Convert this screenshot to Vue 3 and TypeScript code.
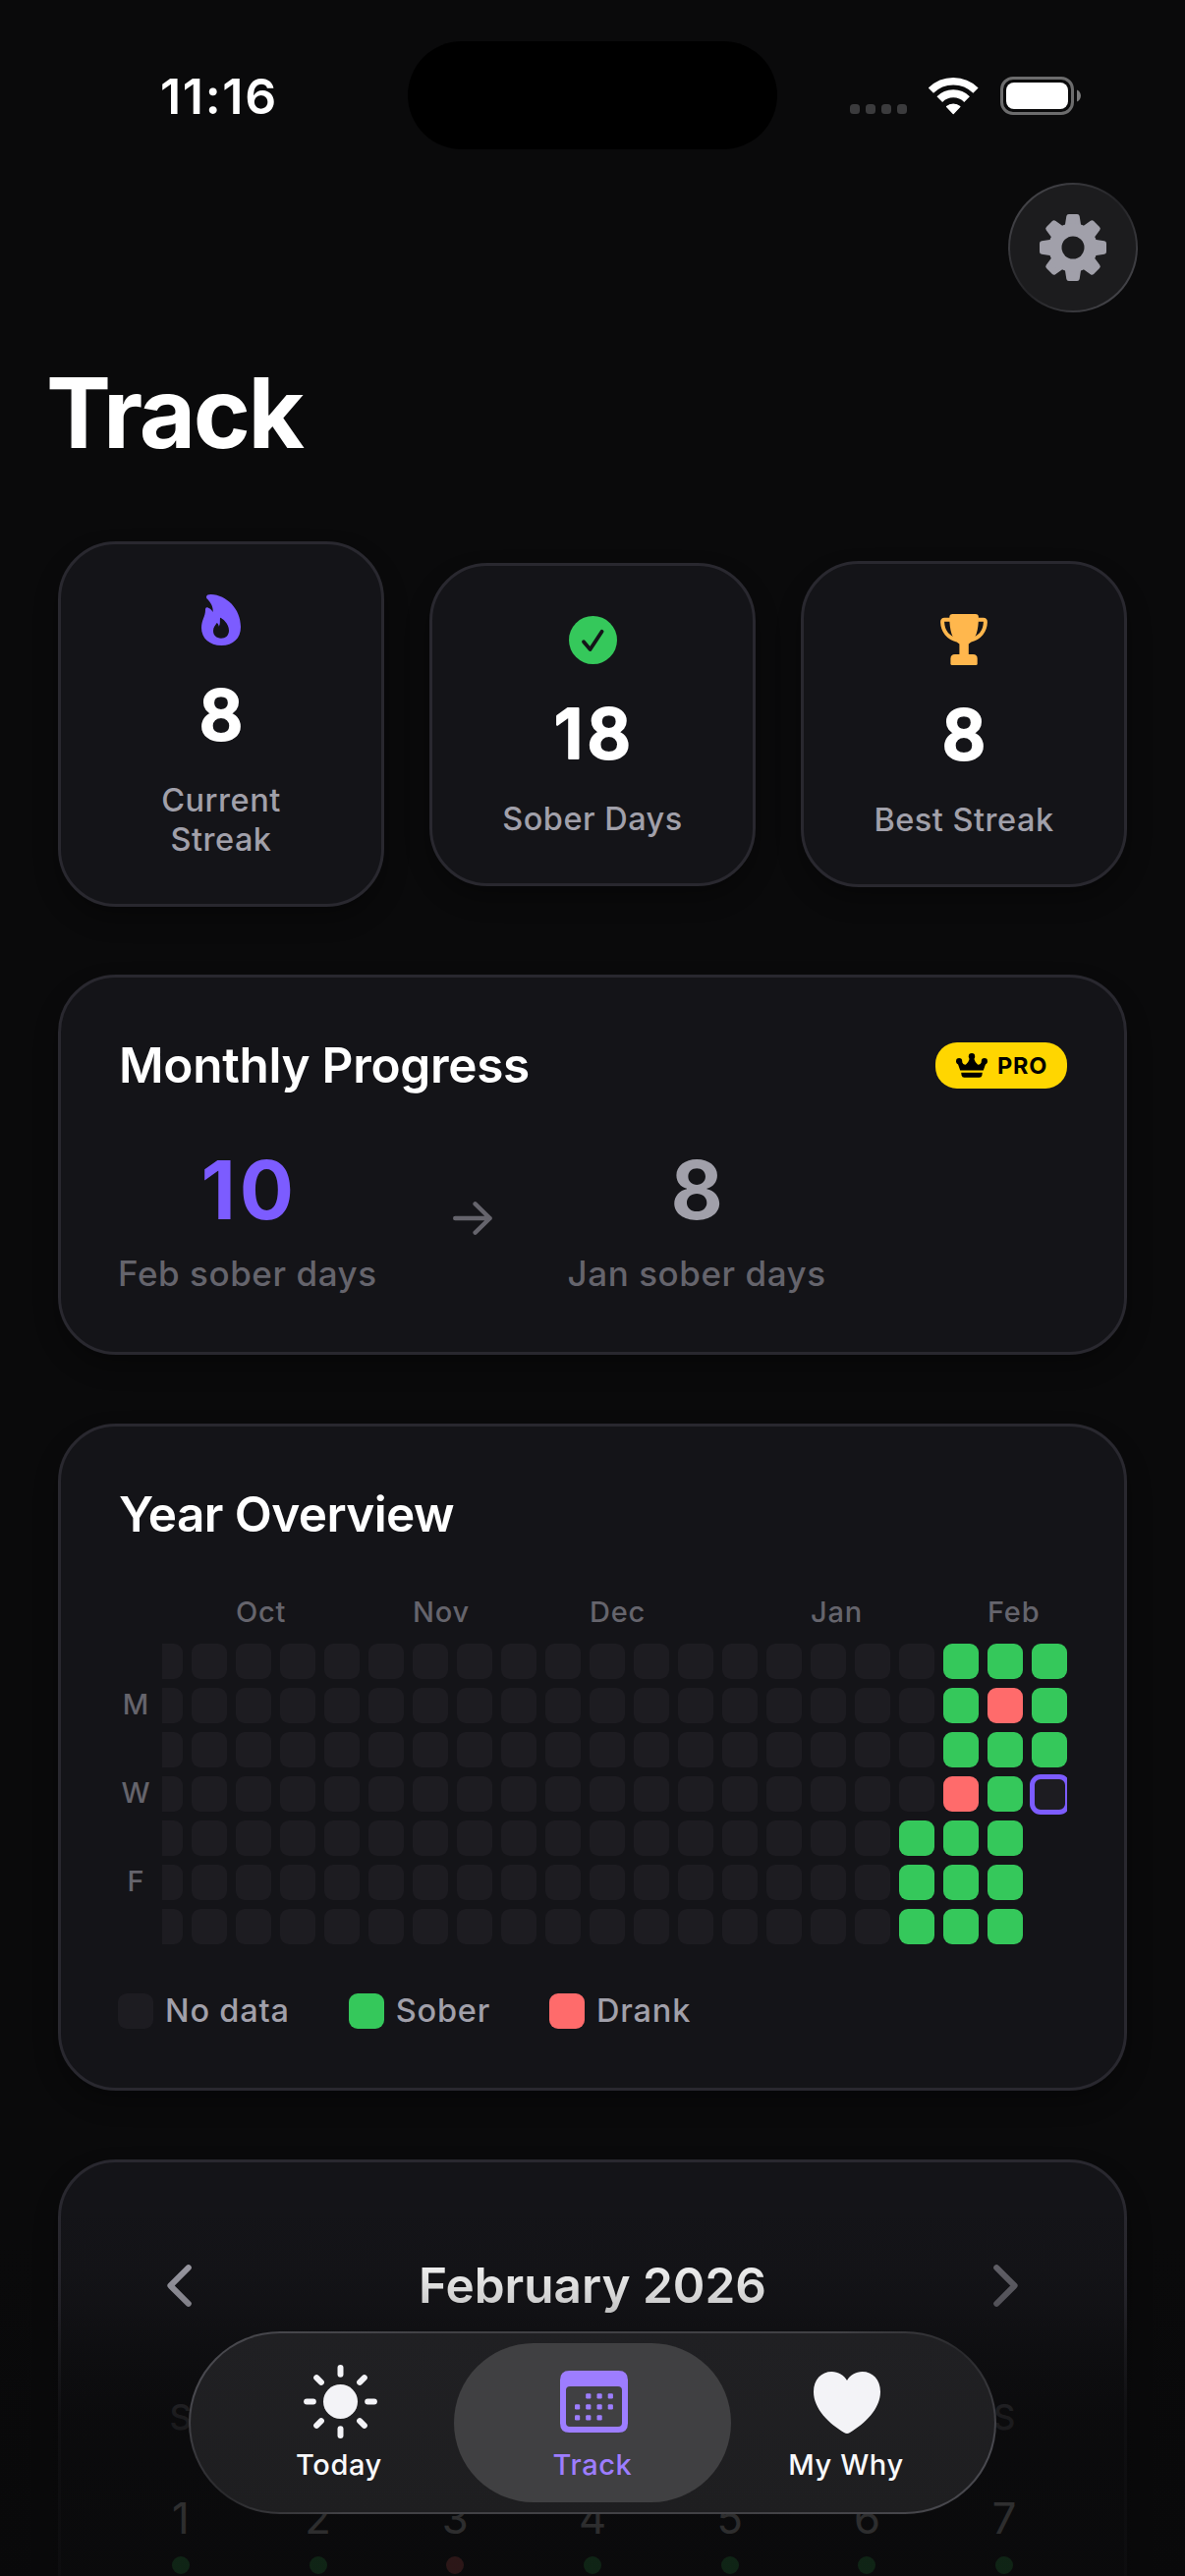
<script setup lang="ts">
type DayState = 'none' | 'sober' | 'drank' | 'today' | 'blank'

interface Stat {
  icon: 'flame' | 'check' | 'trophy'
  value: string
  lines: string[]
}

const stats: Stat[] = [
  { icon: 'flame', value: '8', lines: ['Current', 'Streak'] },
  { icon: 'check', value: '18', lines: ['Sober Days'] },
  { icon: 'trophy', value: '8', lines: ['Best Streak'] },
]

const WEEKS = 21
const emptyWeek: DayState[] = Array(7).fill('none')
const recentWeeks: DayState[][] = [
  ['none', 'none', 'none', 'none', 'sober', 'sober', 'sober'],
  ['sober', 'sober', 'sober', 'drank', 'sober', 'sober', 'sober'],
  ['sober', 'drank', 'sober', 'sober', 'sober', 'sober', 'sober'],
  ['sober', 'sober', 'sober', 'today', 'blank', 'blank', 'blank'],
]
const weeks: DayState[][] = [
  ...Array.from({ length: WEEKS - recentWeeks.length }, () => emptyWeek),
  ...recentWeeks,
]

const monthByWeek: Record<number, string> = { 2: 'Oct', 6: 'Nov', 10: 'Dec', 15: 'Jan', 19: 'Feb' }
const weekdayMarks = ['', 'M', '', 'W', '', 'F', '']

const legend: { state: DayState; label: string }[] = [
  { state: 'none', label: 'No data' },
  { state: 'sober', label: 'Sober' },
  { state: 'drank', label: 'Drank' },
]

const weekdays = ['S', 'M', 'T', 'W', 'T', 'F', 'S']
const firstWeek = [1, 2, 3, 4, 5, 6, 7].map((day) => ({ day, drank: day === 3 }))

const eighths = [0, 45, 90, 135, 180, 225, 270, 315]
const calendarDots = [
  [26.2, 23.2], [37.5, 23.2], [48.7, 23.2],
  [15, 34.2], [26.2, 34.2], [37.5, 34.2], [48.7, 34.2],
  [15, 45.2], [26.2, 45.2], [37.5, 45.2],
]
</script>

<template>
  <div class="screen">
    <header class="status">
      <div class="time">11:16</div>
      <div class="island"></div>
      <div class="indicators">
        <div class="signal"><i v-for="n in 4" :key="n"></i></div>
        <svg class="wifi" width="51" height="38" viewBox="0 0 51 38">
          <g fill="none" stroke="#fff">
            <path d="M2.4 13.2A32.3 32.3 0 0 1 48 13.2" stroke-width="7.4" />
            <path d="M11.3 22.1A19.6 19.6 0 0 1 39.1 22.1" stroke-width="8" />
          </g>
          <path d="M25.2 36.4L18.6 29.6A10 10 0 0 1 31.8 29.6Z" fill="#fff" stroke="#fff" stroke-width="1.4" stroke-linejoin="round" />
        </svg>
        <svg class="battery" width="82" height="39" viewBox="0 0 82 39">
          <rect x="1.5" y="1.5" width="72" height="36" rx="11.5" fill="none" stroke="#6c6c6d" stroke-width="3" />
          <rect x="6" y="6" width="63" height="27" rx="8" fill="#fff" />
          <path d="M78 13.5C83.3 15.5 83.3 23.5 78 25.5Z" fill="#7a7a7b" />
        </svg>
      </div>
    </header>

    <div class="toolbar">
      <button class="settings" aria-label="Settings">
        <svg width="68" height="68" viewBox="-34 -34 68 68">
          <g fill="#a1a0aa" stroke="#a1a0aa" stroke-width="5" stroke-linejoin="round">
            <path v-for="a in eighths" :key="a" d="M-4.2 -31.5H4.2L6 -20H-6Z" :transform="`rotate(${a})`" />
          </g>
          <circle r="24.8" fill="#a1a0aa" />
          <circle r="11.5" fill="#1c1c1e" />
        </svg>
      </button>
    </div>

    <h1>Track</h1>

    <section class="stats">
      <article v-for="s in stats" :key="s.icon" class="card stat">
        <svg v-if="s.icon === 'flame'" width="40" height="52" viewBox="45 28 120 156">
          <path
            fill="#7c5cff"
            fill-rule="evenodd"
            d="M60 36C60 30 66 28 74 28C122 30 165 72 165 127C165 162 142 184 106 184C70 184 45 162 45 130C45 106 57 96 57 76C57 68 61 67 66 69C73 72 77 76 80 82C82 66 72 52 64 43C61 40 60 38 60 36ZM102 99C108 100 129 116 129 138C129 153 119 162 105 162C91 162 81 153 81 139C81 128 88 122 92 115C95 117 98 121 98 126C103 120 101 110 102 99Z"
          />
        </svg>
        <svg v-else-if="s.icon === 'check'" width="49" height="49" viewBox="0 0 49 49">
          <circle cx="24.5" cy="24.5" r="24.5" fill="#35c85b" />
          <path d="M15 26.3L21.6 34L33.6 15.8" fill="none" stroke="#141418" stroke-width="3.8" stroke-linecap="round" stroke-linejoin="round" />
        </svg>
        <svg v-else width="48" height="52" viewBox="0 0 48 52">
          <g fill="#ffb74d">
            <path d="M9.3 3.2Q9.3 0 12.6 0H35.6Q38.9 0 38.9 3.2C38.9 16 36.5 26 28.8 30.5V41.2H19.4V30.5C11.7 26 9.3 16 9.3 3.2Z" />
            <path d="M10.4 45.5Q10.4 41 14.9 41H33.2Q37.7 41 37.7 45.5V50.5Q37.7 52 36.2 52H11.9Q10.4 52 10.4 50.5Z" />
          </g>
          <path d="M10 5.8H4.2Q2 5.8 2.1 8.2C2.4 17.5 8 24.2 17 26.5M38.2 5.8H43.8Q46 5.8 45.9 8.2C45.6 17.5 40 24.2 31 26.5" fill="none" stroke="#ffb74d" stroke-width="4" />
        </svg>
        <svg class="value" width="200" height="84" viewBox="0 0 200 84">
          <text x="102" y="66">{{ s.value }}</text>
        </svg>
        <div class="label"><span v-for="line in s.lines" :key="line">{{ line }}</span></div>
      </article>
    </section>

    <section class="card monthly">
      <div class="card-head">
        <h2>Monthly Progress</h2>
        <div class="pro">
          <svg width="32" height="25" viewBox="0 0 32 25">
            <circle cx="16" cy="3.2" r="3.2" />
            <circle cx="3.1" cy="8.2" r="3.1" />
            <circle cx="28.9" cy="8.2" r="3.1" />
            <path d="M1.4 9.5L4.2 17.6H27.8L30.6 9.5L26.2 8.5Q24.6 12.4 22 11.6Q19.4 9.5 18 5H14Q12.6 9.5 10 11.6Q7.4 12.4 5.8 8.5Z" />
            <path d="M5.2 19.8H26.8L26.4 22.4Q26 24.8 23.6 24.8H8.4Q6 24.8 5.6 22.4Z" />
          </svg>
          <span>PRO</span>
        </div>
      </div>
      <div class="compare">
        <div class="month-total current"><b>10</b><span>Feb sober days</span></div>
        <svg width="40" height="34" viewBox="0 0 40 34">
          <path d="M2.2 17H37.6M22.6 2.4L37.6 17L22.6 31.6" fill="none" stroke="#65646c" stroke-width="4.4" stroke-linecap="round" stroke-linejoin="round" />
        </svg>
        <div class="month-total"><b>8</b><span>Jan sober days</span></div>
      </div>
    </section>

    <section class="card year">
      <div class="card-head"><h2>Year Overview</h2></div>
      <div class="heatmap">
        <div class="day-marks"><span v-for="(d, i) in weekdayMarks" :key="i">{{ d }}</span></div>
        <div class="scroller">
          <div v-for="(week, w) in weeks" :key="w" class="week">
            <span class="month">{{ monthByWeek[w] ?? '' }}</span>
            <i v-for="(state, d) in week" :key="d" class="cell" :class="state"></i>
          </div>
        </div>
      </div>
      <div class="legend">
        <div v-for="item in legend" :key="item.label"><i class="cell" :class="item.state"></i><span>{{ item.label }}</span></div>
      </div>
    </section>

    <section class="card calendar">
      <div class="calendar-head">
        <svg width="25" height="43" viewBox="0 0 25 43">
          <path d="M21.8 3.2L3.4 21.5L21.8 39.8" fill="none" stroke="#a1a0aa" stroke-width="6" stroke-linecap="round" stroke-linejoin="round" />
        </svg>
        <h2>February 2026</h2>
        <svg width="25" height="43" viewBox="0 0 25 43">
          <path d="M3.2 3.2L21.6 21.5L3.2 39.8" fill="none" stroke="#65646c" stroke-width="6" stroke-linecap="round" stroke-linejoin="round" />
        </svg>
      </div>
      <div class="row weekdays"><span v-for="(d, i) in weekdays" :key="i">{{ d }}</span></div>
      <div class="row dates">
        <div v-for="d in firstWeek" :key="d.day"><span>{{ d.day }}</span><i :class="{ drank: d.drank }"></i></div>
      </div>
    </section>

    <div class="fade"></div>

    <nav class="tabs">
      <div class="tab">
        <svg width="75" height="75" viewBox="-37.5 -37.5 75 75">
          <circle r="17.5" fill="#f3f3f7" />
          <path v-for="a in eighths" :key="a" d="M0 -27.7V-34.4" :transform="`rotate(${a})`" stroke="#f3f3f7" stroke-width="6" stroke-linecap="round" />
        </svg>
        <span>Today</span>
      </div>
      <div class="tab active">
        <svg width="69" height="63" viewBox="0 0 69 63">
          <path fill="#9d7dff" fill-rule="evenodd" d="M9.5 0H59.5Q69 0 69 9.5V53.5Q69 63 59.5 63H9.5Q0 63 0 53.5V9.5Q0 0 9.5 0ZM10 16Q6 16 6 20V53Q6 57 10 57H59Q63 57 63 53V20Q63 16 59 16Z" />
          <rect v-for="([x, y], i) in calendarDots" :key="i" :x="x" :y="y" width="5.2" height="5.2" rx="1.2" fill="#9d7dff" />
        </svg>
        <span>Track</span>
      </div>
      <div class="tab">
        <svg width="68" height="63" viewBox="0 0 68 63">
          <path fill="#f3f3f7" d="M34 9C31 3.5 25 0 18.5 0C8 0 0 8 0 20.5C0 38 16 53 31 62C33 63.3 35 63.3 37 62C52 53 68 38 68 20.5C68 8 60 0 49.5 0C43 0 37 3.5 34 9Z" />
        </svg>
        <span>My Why</span>
      </div>
    </nav>
  </div>
</template>

<style>
body {
  background: #0a0a0b;
  overflow: hidden;
}
</style>

<style scoped>
* {
  box-sizing: border-box;
}
.screen {
  position: relative;
  width: 1206px;
  height: 2622px;
  overflow: hidden;
  background: #0a0a0b;
  color: #fff;
  font-family: Inter, "Liberation Sans", sans-serif;
  display: flex;
  flex-direction: column;
}
svg {
  display: block;
  flex: none;
}
h1,
h2 {
  margin: 0;
}

/* status bar */
.status {
  flex: none;
  height: 186px;
  padding-top: 42px;
  display: grid;
  grid-template-columns: 415px 376px 415px;
}
.time {
  padding: 26px 0 0 163px;
  font-size: 50px;
  font-weight: 600;
  line-height: 60px;
  letter-spacing: 1.7px;
}
.island {
  height: 110px;
  border-radius: 55px;
  background: #000;
}
.indicators {
  display: flex;
  align-items: flex-start;
  padding: 36px 0 0 74px;
}
.signal {
  display: flex;
  gap: 6px;
  padding-top: 28px;
}
.signal i {
  width: 10px;
  height: 10px;
  border-radius: 3.5px;
  background: #3b3b3d;
}
.wifi {
  margin: 1px 22px 0 22px;
}

.toolbar {
  flex: none;
  height: 132px;
  padding-right: 48px;
  display: flex;
  justify-content: flex-end;
}
.settings {
  width: 132px;
  height: 132px;
  padding: 0;
  border: 2px solid transparent;
  border-radius: 50%;
  background:
    linear-gradient(#1c1c1e, #1c1c1e) padding-box,
    linear-gradient(135deg, #46464b 10%, #232326 50%, #46464b 90%) border-box;
  display: grid;
  place-items: center;
}
h1 {
  flex: none;
  height: 120px;
  margin: 42px 0 71px 47px;
  font-size: 99px;
  font-weight: 700;
  line-height: 120px;
  letter-spacing: -2.4px;
}

/* cards */
.card {
  flex: none;
  width: 1088px;
  margin-left: 59px;
  padding: 59px 58px 0;
  border: 3px solid #29282f;
  border-radius: 59px;
  background: #141418;
  box-shadow: 0 12px 24px rgba(0, 0, 0, 0.3);
}
.card-head {
  height: 60px;
  display: flex;
  align-items: center;
  justify-content: space-between;
}
h2 {
  font-size: 49.5px;
  font-weight: 600;
  line-height: 60px;
  letter-spacing: -0.3px;
  white-space: nowrap;
}
.card-head h2 {
  padding-left: 1px;
}

.stats {
  flex: none;
  height: 372px;
  margin-bottom: 69px;
  padding-left: 59px;
  display: flex;
  align-items: center;
  gap: 46px;
}
.stat {
  width: 332px;
  margin: 0;
  padding: 51px 20px 45px;
  display: flex;
  flex-direction: column;
  align-items: center;
}
.value {
  margin: 30px 0 24px;
}
.value text {
  font-size: 69.5px;
  font-weight: 600;
  letter-spacing: 4px;
  text-anchor: middle;
  fill: #fff;
  stroke: #fff;
  stroke-width: 2.2px;
  stroke-linejoin: round;
}
.label {
  display: flex;
  flex-direction: column;
  align-items: center;
  font-size: 32.5px;
  font-weight: 500;
  line-height: 40px;
  letter-spacing: 0.5px;
  color: #a1a0aa;
}

/* monthly progress */
.monthly {
  height: 387px;
}
.pro {
  height: 47px;
  width: 134px;
  padding-left: 21px;
  display: flex;
  align-items: center;
  gap: 10px;
  border-radius: 22px;
  background: #ffd600;
  color: #000;
  font-size: 23.5px;
  font-weight: 700;
  letter-spacing: 0.8px;
}
.compare {
  margin-top: 48px;
  display: flex;
  align-items: center;
  gap: 77px;
}
.month-total {
  display: flex;
  flex-direction: column;
  align-items: center;
  gap: 12px;
  color: #65646c;
}
.month-total b {
  margin-right: -4px;
  font-size: 82px;
  line-height: 100px;
  font-weight: 700;
  letter-spacing: 4px;
  color: #a1a0aa;
}
.month-total.current b {
  color: #7c5cff;
}
.month-total span {
  font-size: 35px;
  line-height: 44px;
  font-weight: 500;
  letter-spacing: 0.55px;
  white-space: nowrap;
}

/* year overview */
.year {
  height: 679px;
  margin-top: 70px;
}
.year h2 {
  letter-spacing: -0.6px;
}
.heatmap {
  margin-top: 51px;
  display: flex;
  color: #65646c;
  font-size: 29px;
  font-weight: 500;
}
.day-marks {
  width: 36px;
  margin-right: 9px;
  padding-top: 49.5px;
  display: grid;
  grid-auto-rows: 36px;
  gap: 9px;
  line-height: 36px;
  text-align: center;
}
.scroller {
  width: 921px;
  overflow: hidden;
  display: flex;
  justify-content: flex-end;
  gap: 9px;
  padding-bottom: 3px;
}
.week {
  flex: none;
  width: 36px;
  display: flex;
  flex-direction: column;
  gap: 9px;
}
.month {
  height: 37px;
  margin-bottom: 5px;
  line-height: 37px;
  letter-spacing: 0.8px;
  white-space: nowrap;
}
.cell {
  flex: none;
  width: 36px;
  height: 36px;
  border-radius: 9px;
  background: #1d1c21;
}
.cell.sober {
  background: #35c85b;
}
.cell.drank {
  background: #ff6b6b;
}
.cell.blank {
  background: none;
}
.cell.today {
  width: 41px;
  height: 41px;
  margin: -2.5px;
  border: 5px solid #7c5cff;
  border-radius: 11px;
}
.legend {
  margin-top: 47px;
  display: flex;
  gap: 60px;
}
.legend div {
  display: flex;
  align-items: center;
  gap: 12px;
  color: #a1a0aa;
  font-size: 32.5px;
  font-weight: 500;
  line-height: 36px;
  letter-spacing: 0.8px;
}

/* calendar */
.calendar {
  height: 700px;
  margin-top: 70px;
  padding-top: 95px;
}
.calendar h2 {
  letter-spacing: 0;
}
.calendar-head {
  height: 60px;
  padding: 0 50px;
  display: flex;
  align-items: center;
  justify-content: space-between;
}
.row {
  display: grid;
  grid-template-columns: repeat(7, 1fr);
  column-gap: 12px;
  text-align: center;
}
.weekdays {
  margin-top: 82px;
  font-size: 35px;
  font-weight: 500;
  line-height: 44px;
  color: #65646c;
}
.dates {
  margin-top: 51px;
  font-size: 43.5px;
  line-height: 60px;
}
.dates div {
  display: flex;
  flex-direction: column;
  align-items: center;
  gap: 9px;
}
.dates i {
  width: 18px;
  height: 18px;
  border-radius: 50%;
  background: #35c85b;
}
.dates i.drank {
  background: #ff6b6b;
}
.fade {
  position: absolute;
  inset: 2230px 0 0 0;
  background: linear-gradient(
    rgba(9, 9, 10, 0) 0,
    rgba(9, 9, 10, 0.07) 78px,
    rgba(9, 9, 10, 0.2) 114px,
    rgba(9, 9, 10, 0.55) 170px,
    rgba(9, 9, 10, 0.8) 230px,
    rgba(9, 9, 10, 0.85) 330px,
    rgba(9, 9, 10, 0.86) 392px
  );
}

/* floating tab bar */
.tabs {
  position: absolute;
  left: 192px;
  top: 2373px;
  width: 822px;
  height: 186px;
  padding: 10px;
  border: 2px solid transparent;
  border-radius: 93px;
  background:
    linear-gradient(#202023, #1e1e20) padding-box,
    conic-gradient(#414145 70deg, #29292c 79deg, #4a4a50 94deg, #414145 120deg, #414145 250deg, #29292c 259deg, #4a4a50 274deg, #414145 300deg) border-box;
  display: flex;
  justify-content: space-between;
}
.tab {
  width: 282px;
  height: 162px;
  border-radius: 81px;
  display: flex;
  flex-direction: column;
  justify-content: space-between;
  align-items: center;
  padding: 28px 0 20px;
  font-size: 29px;
  font-weight: 500;
  line-height: 36px;
  letter-spacing: 0.6px;
  color: #f9f9fb;
}
.tab svg {
  margin-left: 2px;
}
.tab:first-child {
  margin-right: -24px;
  padding-top: 22px;
}
.tab:last-child {
  margin-left: -24px;
  padding-top: 29px;
}
.tab.active {
  background: #404042;
  color: #9d7dff;
}
</style>
